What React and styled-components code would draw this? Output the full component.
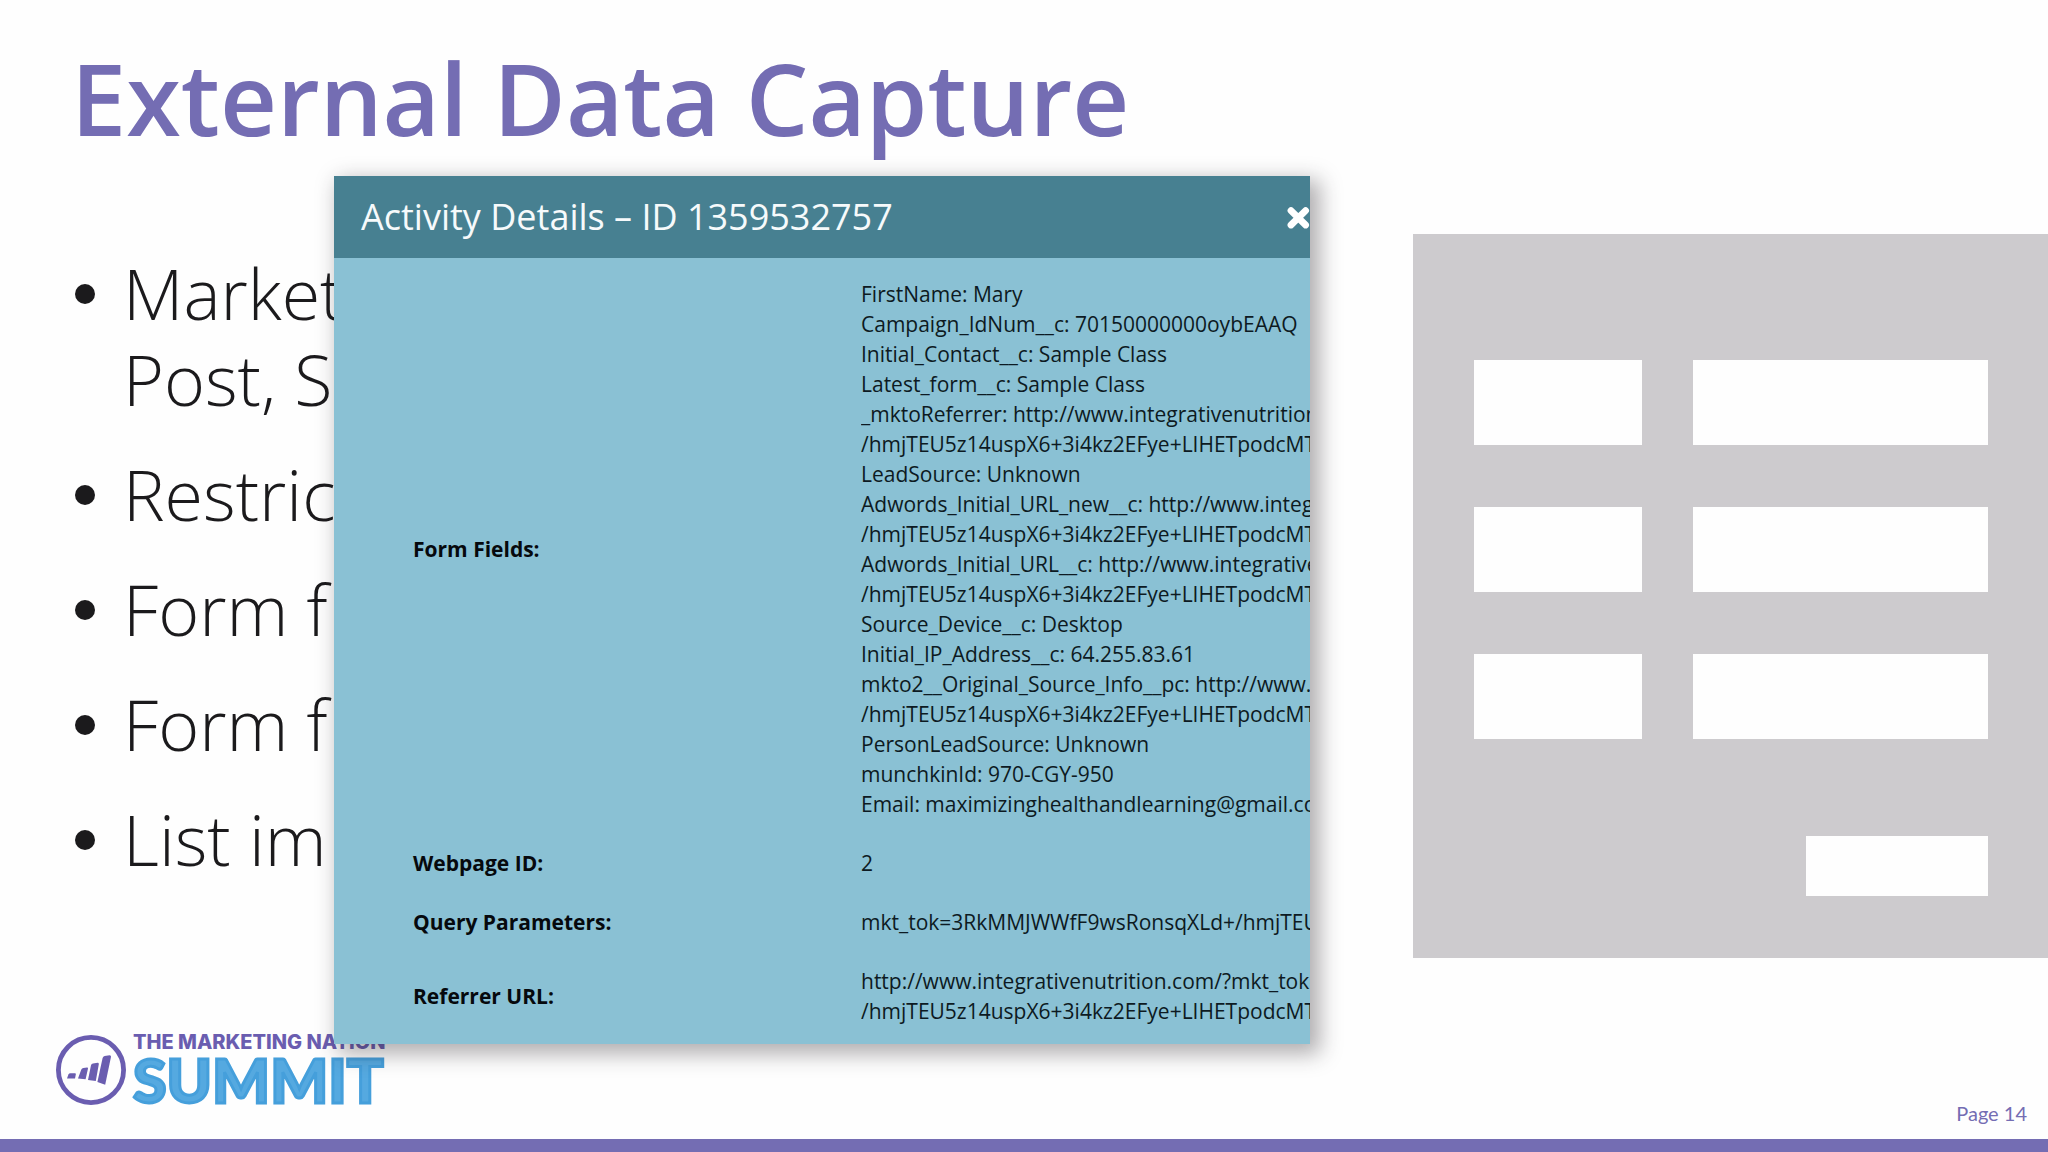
import React from "react";
import styled, { createGlobalStyle } from "styled-components";

const PURPLE = "#746db3";
const LOGO_PURPLE = "#6a5db0";
const BLUE = "#459fdb";

const GlobalStyle = createGlobalStyle`
  *, *::before, *::after { box-sizing: border-box; }
  body { margin: 0; background: #fefefe; }
`;

const Slide = styled.div`
  position: relative;
  display: flex;
  flex-direction: column;
  min-height: 100vh;
  overflow: hidden;
  background: #fefefe;
  font-family: "Open Sans", sans-serif;
`;

const SlideHeader = styled.header`
  padding: 38px 71px 76px;
`;

const Title = styled.h1`
  margin: 0;
  color: ${PURPLE};
  font-size: 99px;
  font-weight: 600;
  line-height: 120px;
`;

const Content = styled.main`
  display: flex;
  flex: 1;
  align-items: flex-start;
  justify-content: space-between;
`;

const BulletList = styled.ul`
  display: flex;
  flex-direction: column;
  gap: 29px;
  margin: 0;
  padding: 16px 0 0 75px;
  list-style: none;
`;

const Bullet = styled.li`
  display: flex;
  gap: 28px;
  color: #1b1a1c;
  font-size: 70px;
  font-weight: 300;
  line-height: 86px;
  white-space: pre-line;

  &::before {
    content: "";
    flex: none;
    width: 20px;
    height: 20px;
    margin-top: 34px;
    border-radius: 50%;
    background: currentColor;
  }
`;

const FormPanel = styled.form`
  display: flex;
  flex: 0 0 31%;
  flex-direction: column;
  gap: 62px;
  padding: 126px 60px 62px 61px;
  background: #cdcbce;
`;

const FieldRow = styled.div`
  display: grid;
  grid-template-columns: 168px 1fr;
  gap: 51px;
  height: 85px;
`;

const FieldLabel = styled.label`
  background: #fefefe;
`;

const FieldInput = styled.input`
  width: 100%;
  min-width: 0;
  border: 0;
  padding: 0 16px;
  background: #fefefe;
  font: 400 21px "Open Sans", sans-serif;
`;

const SubmitButton = styled.button`
  align-self: flex-end;
  width: 182px;
  height: 60px;
  margin-top: 35px;
  border: 0;
  background: #fefefe;
`;

const Dialog = styled.section`
  position: absolute;
  z-index: 1;
  top: 176px;
  left: 334px;
  width: 976px;
  background: #8ac1d4;
  box-shadow: 7px 7px 20px 3px rgba(40, 34, 40, 0.36);
`;

const DialogHeader = styled.header`
  display: flex;
  align-items: center;
  justify-content: space-between;
  height: 82px;
  padding-left: 27px;
  background: #478091;
`;

const DialogTitle = styled.h2`
  margin: 0;
  color: #f6fafb;
  font-size: 36px;
  font-weight: 400;
  line-height: 48px;
`;

const CloseButton = styled.button`
  display: flex;
  padding: 0;
  border: 0;
  background: none;
  color: #fff;
`;

const DetailsBody = styled.div`
  overflow: hidden;
  padding: 6px 0 4px;
`;

const DetailsTable = styled.table`
  width: 100%;
  border-collapse: collapse;
  table-layout: fixed;
  color: #0d1a22;
  font-size: 21px;
  line-height: 30px;
  white-space: nowrap;
`;

const LabelCell = styled.th`
  width: 527px;
  padding: 15px 0 14px 79px;
  color: #06090d;
  font-weight: 700;
  text-align: left;
`;

const ValueCell = styled.td`
  padding: 15px 0 14px;
  overflow: hidden;
  white-space: pre;
`;

const Footer = styled.footer`
  display: flex;
  align-items: flex-end;
  justify-content: space-between;
  padding: 0 21px 14px 55px;
  border-bottom: 13px solid ${PURPLE};
`;

const Logo = styled.div`
  display: flex;
  align-items: flex-end;
  gap: 6px;
  margin-bottom: 19px;
`;

const LogoText = styled.div`
  display: flex;
  flex-direction: column;
  gap: 2px;
`;

const LogoName = styled.span`
  color: ${LOGO_PURPLE};
  font-family: Inter, sans-serif;
  font-size: 20px;
  font-weight: 800;
  line-height: 20px;
`;

const LogoEvent = styled.span`
  color: #55a9e0;
  font-family: Lato, sans-serif;
  font-size: 61px;
  font-weight: 900;
  line-height: 52px;
  -webkit-text-stroke: 3px ${BLUE};
`;

const PageNumber = styled.span`
  color: ${PURPLE};
  font-family: Lato, sans-serif;
  font-size: 20px;
  line-height: 24px;
`;

const bullets = ["Market\nPost, S", "Restric", "Form f", "Form f", "List im"];

const token = "/hmjTEU5z14uspX6+3i4kz2EFye+LIHETpodcMT";

const details = [
  {
    label: "Form Fields:",
    lines: [
      "FirstName: Mary",
      "Campaign_IdNum__c: 70150000000oybEAAQ",
      "Initial_Contact__c: Sample Class",
      "Latest_form__c: Sample Class",
      "_mktoReferrer: http://www.integrativenutrition",
      token,
      "LeadSource: Unknown",
      "Adwords_Initial_URL_new__c: http://www.integ",
      token,
      "Adwords_Initial_URL__c: http://www.integrative",
      token,
      "Source_Device__c: Desktop",
      "Initial_IP_Address__c: 64.255.83.61",
      "mkto2__Original_Source_Info__pc: http://www.",
      token,
      "PersonLeadSource: Unknown",
      "munchkinId: 970-CGY-950",
      "Email: maximizinghealthandlearning@gmail.com",
    ],
  },
  { label: "Webpage ID:", lines: ["2"] },
  { label: "Query Parameters:", lines: ["mkt_tok=3RkMMJWWfF9wsRonsqXLd+/hmjTEU"] },
  {
    label: "Referrer URL:",
    lines: ["http://www.integrativenutrition.com/?mkt_tok=", token],
  },
];

const fields = ["first", "second", "third"];

function LogoMark() {
  return (
    <svg width="72" height="72" viewBox="0 0 72 72" fill="none" aria-hidden="true">
      <circle cx="36" cy="36" r="32.6" stroke={LOGO_PURPLE} strokeWidth="4.8" />
      <g fill={LOGO_PURPLE}>
        <path d="M12 44.5 L13.4 40.5 Q14 39.2 15.4 39.2 H20 Q21 39.2 20.8 40.4 L20 44.6 Z" />
        <path d="M23 44.5 L26.2 35.8 Q26.8 34.2 28.4 34 L32 33.4 Q33.2 33.3 33 34.6 L30.6 45.2 Z" />
        <path d="M33 46 L36 31.2 Q36.4 29.6 38 29.4 L42.6 28.8 Q44 28.8 43.8 30.2 L40.8 47 Z" />
        <path d="M42.4 48 L47.6 24 Q48 22.3 49.6 22 L54.6 21.2 Q56.2 21.2 56 22.8 L50.2 50.8 Z" />
      </g>
    </svg>
  );
}

function CloseIcon() {
  return (
    <svg width="24" height="24" viewBox="0 0 24 24" fill="none" aria-hidden="true">
      <path
        d="M5 5.6 L19.6 20 M19.6 5.6 L5 20"
        stroke="currentColor"
        strokeWidth="6.8"
        strokeLinecap="round"
      />
    </svg>
  );
}

export default function App() {
  return (
    <Slide>
      <GlobalStyle />
      <SlideHeader>
        <Title>External Data Capture</Title>
      </SlideHeader>

      <Content>
        <BulletList>
          {bullets.map((text, i) => (
            <Bullet key={i}>{text}</Bullet>
          ))}
        </BulletList>

        <FormPanel onSubmit={(e) => e.preventDefault()}>
          {fields.map((name) => (
            <FieldRow key={name}>
              <FieldLabel htmlFor={name} />
              <FieldInput id={name} name={name} aria-label={`${name} field`} />
            </FieldRow>
          ))}
          <SubmitButton type="submit" aria-label="Submit" />
        </FormPanel>
      </Content>

      <Dialog role="dialog" aria-labelledby="dialog-title">
        <DialogHeader>
          <DialogTitle id="dialog-title">Activity Details – ID 1359532757</DialogTitle>
          <CloseButton type="button" aria-label="Close">
            <CloseIcon />
          </CloseButton>
        </DialogHeader>
        <DetailsBody>
          <DetailsTable>
            <tbody>
              {details.map(({ label, lines }) => (
                <tr key={label}>
                  <LabelCell scope="row">{label}</LabelCell>
                  <ValueCell>{lines.join("\n")}</ValueCell>
                </tr>
              ))}
            </tbody>
          </DetailsTable>
        </DetailsBody>
      </Dialog>

      <Footer>
        <Logo>
          <LogoMark />
          <LogoText>
            <LogoName>THE MARKETING NATION</LogoName>
            <LogoEvent>SUMMIT</LogoEvent>
          </LogoText>
        </Logo>
        <PageNumber>Page 14</PageNumber>
      </Footer>
    </Slide>
  );
}
